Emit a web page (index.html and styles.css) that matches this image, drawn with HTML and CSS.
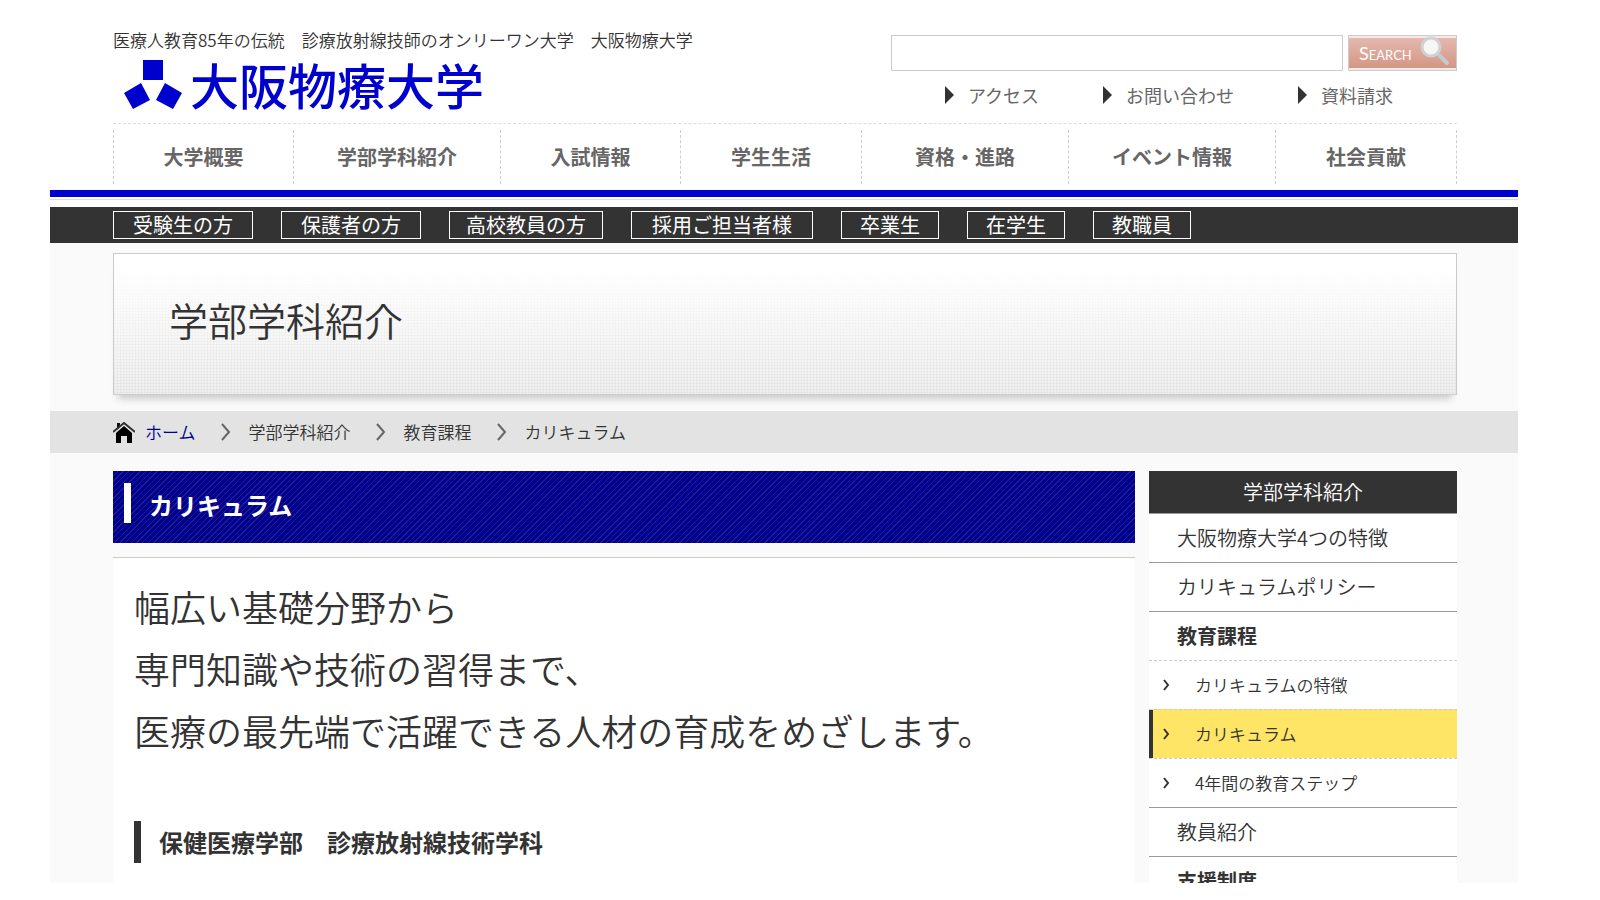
FILE: index.html
```html
<!DOCTYPE html>
<html lang="ja">
<head>
<meta charset="utf-8">
<title>カリキュラム | 大阪物療大学</title>
<link rel="stylesheet" href="styles.css">
</head>
<body>
<div class="page">
  <header class="header inner">
    <div class="header-top">
      <div class="brand">
        <p class="tagline">医療人教育85年の伝統　診療放射線技師のオンリーワン大学　大阪物療大学</p>
        <a class="logo" href="#">
          <svg class="logo-mark" viewBox="0 0 58 50" aria-hidden="true">
            <path d="M19 0h20v20h-20zM0 33L17 23 26 40 9 49zM41 23L58 33 49 49 32 40z"/>
          </svg>
          <span>大阪物療大学</span>
        </a>
      </div>
      <div class="tools">
        <form class="search">
          <input class="search-box" type="text" aria-label="サイト内検索">
          <button class="search-button" type="button">
            <span>Search</span>
            <svg class="search-icon" viewBox="0 0 30 30" aria-hidden="true">
              <path d="M18 18l9 9" stroke="#c3c9cf" stroke-width="4" stroke-linecap="round"/>
              <circle cx="11" cy="11" r="9" fill="#f6f6f6" stroke="#cfd1d3" stroke-width="3"/>
            </svg>
          </button>
        </form>
        <ul class="utility">
          <li><a href="#">アクセス</a></li>
          <li><a href="#">お問い合わせ</a></li>
          <li><a href="#">資料請求</a></li>
        </ul>
      </div>
    </div>
    <nav class="global-nav">
      <a href="#">大学概要</a>
      <a href="#">学部学科紹介</a>
      <a href="#">入試情報</a>
      <a href="#">学生生活</a>
      <a href="#">資格・進路</a>
      <a href="#">イベント情報</a>
      <a href="#">社会貢献</a>
    </nav>
  </header>
  <div class="rule"></div>
  <nav class="audience inner">
    <a class="size-m" href="#">受験生の方</a>
    <a class="size-m" href="#">保護者の方</a>
    <a class="size-l" href="#">高校教員の方</a>
    <a class="size-xl" href="#">採用ご担当者様</a>
    <a class="size-s" href="#">卒業生</a>
    <a class="size-s" href="#">在学生</a>
    <a class="size-s" href="#">教職員</a>
  </nav>
  <div class="inner">
    <div class="banner"><h1>学部学科紹介</h1></div>
  </div>
  <nav class="breadcrumb inner">
    <svg class="home-icon" viewBox="0 0 22 21" aria-hidden="true">
      <path d="M4 1h3v4l-3 3z" fill="#111"/>
      <path d="M0 10L11 1l11 9" fill="none" stroke="#333" stroke-width="2"/>
      <path d="M3 11l8-7 8 7v10h-5v-7H8v7H3z" fill="#000"/>
    </svg>
    <a href="#">ホーム</a>
    <svg class="crumb-arrow" viewBox="0 0 10 18" aria-hidden="true"><path d="M1 1l7 8-7 8"/></svg>
    <span>学部学科紹介</span>
    <svg class="crumb-arrow" viewBox="0 0 10 18" aria-hidden="true"><path d="M1 1l7 8-7 8"/></svg>
    <span>教育課程</span>
    <svg class="crumb-arrow" viewBox="0 0 10 18" aria-hidden="true"><path d="M1 1l7 8-7 8"/></svg>
    <span>カリキュラム</span>
  </nav>
  <div class="columns inner">
    <main class="main">
      <h2 class="title">カリキュラム</h2>
      <section class="content">
        <p class="lead">幅広い基礎分野から<br>専門知識や技術の習得まで、<br>医療の最先端で活躍できる人材の育成をめざします。</p>
        <h3 class="subject">保健医療学部　診療放射線技術学科</h3>
      </section>
    </main>
    <aside class="side">
      <h2 class="side-title">学部学科紹介</h2>
      <ul class="side-nav">
        <li><a href="#">大阪物療大学4つの特徴</a></li>
        <li><a href="#">カリキュラムポリシー</a></li>
        <li class="group"><a href="#">教育課程</a></li>
        <li class="sub"><a href="#"><svg viewBox="0 0 7 12" aria-hidden="true"><path d="M1 1l4 5-4 5"/></svg>カリキュラムの特徴</a></li>
        <li class="sub current"><a href="#"><svg viewBox="0 0 7 12" aria-hidden="true"><path d="M1 1l4 5-4 5"/></svg>カリキュラム</a></li>
        <li class="sub"><a href="#"><svg viewBox="0 0 7 12" aria-hidden="true"><path d="M1 1l4 5-4 5"/></svg>4年間の教育ステップ</a></li>
        <li><a href="#">教員紹介</a></li>
        <li class="group"><a href="#">支援制度</a></li>
      </ul>
    </aside>
  </div>
</div>
</body>
</html>
```
FILE: styles.css
```css
* {
  box-sizing: border-box;
}

body {
  margin: 0 82px 0 50px;
  background: #fff;
  color: #333;
  font-family: "Noto Sans CJK JP", sans-serif;
  font-size: 17px;
  font-weight: 350;
  line-height: 24px;
}

h1, h2, h3, p, ul {
  margin: 0;
  padding: 0;
}

ul {
  list-style: none;
}

a {
  color: inherit;
  text-decoration: none;
}

.page {
  height: calc(100vh - 17px);
  overflow-y: auto;
  scrollbar-width: none;
  background: #fafafa;
}

.inner {
  padding-left: 63px;
  padding-right: 61px;
}

.header {
  background: #fff;
  padding-top: 28px;
  padding-bottom: 6px;
}

.header-top {
  display: flex;
  justify-content: space-between;
  height: 95px;
}

.logo {
  display: flex;
  align-items: flex-end;
  gap: 8px;
  padding: 6px 0 0 11px;
  color: #0000ce;
  font-size: 49px;
  font-weight: 500;
  line-height: 52px;
}

.logo-mark {
  width: 58px;
  height: 50px;
  fill: #0000ce;
}

.tools {
  flex: 0 0 566px;
  padding-top: 7px;
}

.search {
  display: flex;
  gap: 5px;
  height: 36px;
}

.search-box {
  flex: 1;
  min-width: 0;
  border: 1px solid #ccc;
  padding: 0 8px;
  font-size: 17px;
}

.search-button {
  display: flex;
  align-items: center;
  justify-content: space-between;
  width: 109px;
  padding: 0 6px 0 10px;
  border: 1px solid #ccc;
  border-radius: 0;
  background: linear-gradient(#e6bab1, #d29482);
  box-shadow: inset 0 2px #f4e9e6, inset 0 -2px #f4e9e6;
  color: #fff;
  font-family: Lato, sans-serif;
  font-size: 18px;
  font-variant: small-caps;
}

.search-icon {
  flex: none;
  width: 30px;
  height: 30px;
  margin-bottom: 5px;
  fill: none;
}

.utility {
  display: flex;
  justify-content: flex-end;
  gap: 64px;
  padding: 12px 64px 0 0;
  color: #666;
  font-size: 18px;
  font-weight: 400;
}

.utility a {
  display: flex;
  align-items: center;
  gap: 14px;
}

.utility a::before {
  content: "";
  border-left: 9px solid #333;
  border-top: 9px solid transparent;
  border-bottom: 9px solid transparent;
}

.global-nav {
  display: grid;
  grid-template-columns: 180fr 207fr 180fr 181fr 207fr 207fr 182fr;
  border-top: 1px dashed #ddd;
  padding-top: 6px;
}

.global-nav a {
  border-left: 1px dashed #ccc;
  color: #666;
  font-size: 20px;
  font-weight: 700;
  line-height: 54px;
  text-align: center;
}

.global-nav a:last-child {
  border-right: 1px dashed #ccc;
}

.rule {
  height: 17px;
  border-top: 7px solid #0000ce;
  background: linear-gradient(#fff 2px, #ddd 2px, #ddd 3px, #fff 3px);
}

.audience {
  display: flex;
  gap: 28px;
  padding-top: 4px;
  padding-bottom: 4px;
  background: #333;
}

.audience a {
  border: 1px solid #fff;
  color: #fff;
  font-size: 20px;
  font-weight: 400;
  line-height: 26px;
  text-align: center;
}

.size-s {
  width: 98px;
}

.size-m {
  width: 140px;
}

.size-l {
  width: 154px;
}

.size-xl {
  width: 182px;
}

.banner {
  margin: 10px 0 16px;
  padding: 35px 55px 45px;
  border: 1px solid #ccc;
  background:
    linear-gradient(#fff 10%, rgba(255, 255, 255, 0)),
    repeating-linear-gradient(90deg, rgba(0, 0, 0, 0.04) 0 1px, transparent 1px 3px),
    repeating-linear-gradient(rgba(0, 0, 0, 0.04) 0 1px, transparent 1px 3px),
    #f0f0f0;
  box-shadow: 0 9px 7px -5px #ccc;
}

.banner h1 {
  font-size: 39px;
  font-weight: 350;
  line-height: 60px;
}

.breadcrumb {
  display: flex;
  align-items: center;
  height: 42px;
  background: #e3e3e3;
}

.breadcrumb a {
  color: #00008c;
}

.home-icon {
  width: 22px;
  height: 21px;
  margin-right: 10px;
}

.crumb-arrow {
  width: 10px;
  height: 18px;
  margin: 0 18px 0 25px;
  fill: none;
  stroke: #666;
  stroke-width: 2;
}

.columns {
  display: flex;
  align-items: stretch;
  gap: 14px;
  padding-top: 18px;
}

.main {
  display: flex;
  flex: 1;
  flex-direction: column;
  min-width: 0;
}

.title {
  display: flex;
  align-items: flex-start;
  gap: 18px;
  height: 72px;
  padding: 12px 11px;
  background: repeating-linear-gradient(135deg, #00008c 0 3px, #1c1c96 3px 4px);
  color: #fff;
  font-size: 24px;
  font-weight: 700;
  line-height: 44px;
}

.title::before {
  content: "";
  width: 7px;
  height: 40px;
  background: #fff;
}

.content {
  flex: 1;
  margin-top: 14px;
  padding: 17px 21px;
  border-top: 1px solid #ccc;
  background: #fff;
}

.lead {
  font-size: 36px;
  line-height: 62px;
}

.subject {
  margin-top: 60px;
  padding-left: 18px;
  border-left: 7px solid #333;
  font-size: 24px;
  font-weight: 700;
  line-height: 42px;
}

.side {
  flex: 0 0 308px;
}

.side-title {
  background: #333;
  color: #fff;
  font-size: 20px;
  font-weight: 350;
  line-height: 42px;
  text-align: center;
}

.side-nav {
  background: #fff;
}

.side-nav li {
  border-top: 1px solid #999;
  font-size: 20px;
}

.side-nav a {
  display: flex;
  align-items: center;
  height: 48px;
  padding-left: 28px;
}

.side-nav .group {
  font-weight: 700;
}

.side-nav .sub {
  border-top: 1px dashed #ccc;
  font-size: 17px;
}

.side-nav .sub a {
  gap: 25px;
  padding-left: 14px;
}

.side-nav svg {
  width: 7px;
  height: 12px;
  fill: none;
  stroke: #333;
  stroke-width: 2;
}

.side-nav .current {
  background: #ffe566;
  box-shadow: inset 4px 0 #333;
}
```
